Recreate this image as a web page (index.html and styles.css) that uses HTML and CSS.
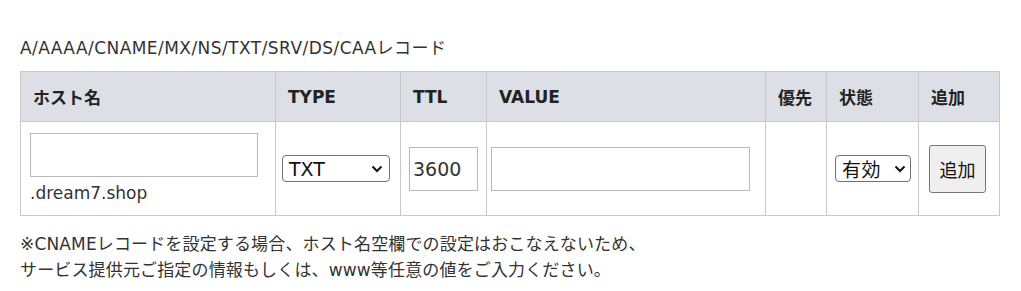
FILE: index.html
```html
<!DOCTYPE html>
<html lang="ja">
<head>
<meta charset="utf-8">
<link rel="stylesheet" href="styles.css">
</head>
<body>
<div class="wrap">
  <p class="title">A/AAAA/CNAME/MX/NS/TXT/SRV/DS/CAAレコード</p>
  <table class="records">
    <colgroup>
      <col class="c-host"><col class="c-type"><col class="c-ttl"><col class="c-value"><col class="c-prio"><col class="c-state"><col class="c-add">
    </colgroup>
    <thead>
      <tr>
        <th>ホスト名</th><th>TYPE</th><th>TTL</th><th>VALUE</th><th>優先</th><th>状態</th><th>追加</th>
      </tr>
    </thead>
    <tbody>
      <tr>
        <td class="td-host"><input class="in-host" type="text"><div class="domain">.dream7.shop</div></td>
        <td class="td-type"><div class="sel sel-type"><span>TXT</span><svg viewBox="0 0 12 8" class="chev"><path d="M1.5 1.5 L6 6 L10.5 1.5" fill="none" stroke="#111" stroke-width="2"/></svg></div></td>
        <td class="td-ttl"><input class="in-ttl" type="text" value="3600"></td>
        <td class="td-value"><input class="in-value" type="text"></td>
        <td></td>
        <td class="td-state"><div class="sel sel-state"><span>有効</span><svg viewBox="0 0 12 8" class="chev"><path d="M1.5 1.5 L6 6 L10.5 1.5" fill="none" stroke="#111" stroke-width="2"/></svg></div></td>
        <td class="td-add"><button class="btn" type="button">追加</button></td>
      </tr>
    </tbody>
  </table>
  <p class="note">※CNAMEレコードを設定する場合、ホスト名空欄での設定はおこなえないため、<br>サービス提供元ご指定の情報もしくは、www等任意の値をご入力ください。</p>
</div>
</body>
</html>
```

FILE: styles.css
```css
html, body {
  margin: 0;
  padding: 0;
  background: #fff;
}
body {
  font-family: "DejaVu Sans", "Noto Sans CJK JP", sans-serif;
  color: #333;
  font-size: 17px;
}
.wrap {
  padding: 36px 20px 0 20px;
}
.title {
  margin: 0 0 11px 0;
  font-size: 17px;
  line-height: 24px;
  letter-spacing: 0.45px;
  color: #333;
}
.records {
  border-collapse: collapse;
  width: 980px;
  table-layout: fixed;
}
.c-host { width: 255px; }
.c-type { width: 125px; }
.c-ttl { width: 86px; }
.c-value { width: 279px; }
.c-prio { width: 61px; }
.c-state { width: 92px; }
.c-add { width: 81px; }
.records th, .records td {
  border: 1px solid #c8c8c8;
}
.records th {
  background: #dce0e6;
  height: 49px;
  padding: 0 0 0 12px;
  text-align: left;
  font-weight: bold;
  font-size: 17px;
  color: #222;
}
.records td {
  height: 93px;
  padding: 0;
  vertical-align: middle;
}
.td-host { padding-left: 9px !important; }
.in-host {
  display: block;
  box-sizing: border-box;
  width: 228px;
  height: 44px;
  margin: 0;
  border: 1px solid #b8b8b8;
  padding: 0 6px;
  font: inherit;
}
.domain {
  margin-top: 4px;
  line-height: 24px;
  color: #333;
}
.td-type { padding-left: 6px !important; }
.sel {
  box-sizing: border-box;
  display: flex;
  align-items: center;
  justify-content: space-between;
  height: 27px;
  border: 1px solid #707070;
  border-radius: 4px;
  background: #fff;
  color: #111;
  font-size: 19px;
  padding: 0 6px 0 6px;
}
.sel-type { width: 108px; }
.sel-state { width: 76px; padding-left: 6px; padding-right: 4px; }
.sel-state span { font-family: "Noto Sans CJK JP", sans-serif; font-size: 19px; letter-spacing: 0.5px; }
.chev { width: 12px; height: 8px; }
.td-ttl { padding-left: 8px !important; }
.in-ttl {
  box-sizing: border-box;
  width: 69px;
  height: 44px;
  border: 1px solid #b8b8b8;
  margin: 0;
  padding: 0 3px;
  font: inherit;
  font-size: 19px;
  color: #333;
}
.td-value { padding-left: 4px !important; }
.in-value {
  box-sizing: border-box;
  width: 259px;
  height: 44px;
  border: 1px solid #b8b8b8;
  margin: 0;
  padding: 0 6px;
  font: inherit;
}
.td-state { padding-left: 8px !important; }
.td-add { padding-left: 10px !important; }
.btn {
  box-sizing: border-box;
  width: 57px;
  height: 48px;
  border: 1px solid #767676;
  border-radius: 3px;
  background: #efefef;
  font-family: "Noto Sans CJK JP", sans-serif;
  font-size: 18px;
  color: #111;
  padding: 0;
  margin: 0;
}
.note {
  margin: 15px 0 0 0;
  line-height: 26px;
  font-size: 17px;
  letter-spacing: 0.15px;
  color: #333;
}
```
